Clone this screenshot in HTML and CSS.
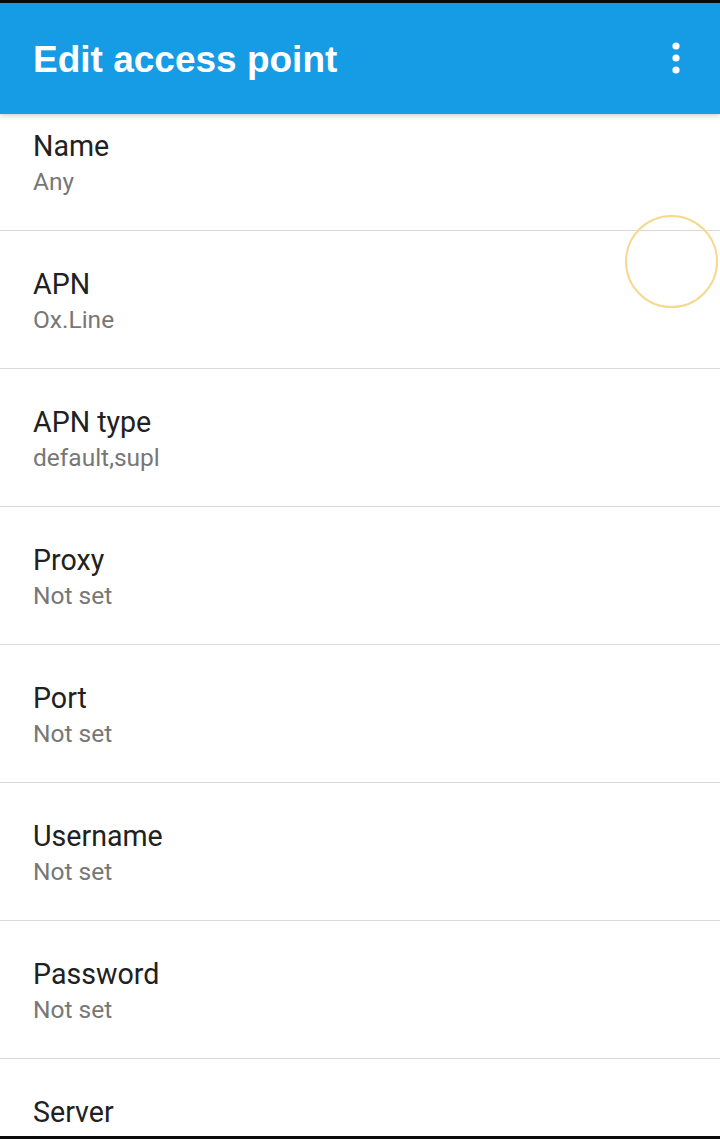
FILE: index.html
```html
<!DOCTYPE html>
<html lang="en">
<head>
<meta charset="utf-8">
<title>Edit access point</title>
<link rel="stylesheet" href="styles.css">
</head>
<body>
<div class="screen">
  <header class="appbar">
    <h1 class="appbar-title">Edit access point</h1>
    <button class="overflow" aria-label="More options">
      <svg width="12" height="36" viewBox="0 0 12 36"><circle cx="6" cy="6" r="3.6" fill="#fff"/><circle cx="6" cy="18" r="3.6" fill="#fff"/><circle cx="6" cy="30" r="3.6" fill="#fff"/></svg>
    </button>
  </header>
  <main class="list">
    <div class="pref first"><div class="pref-title">Name</div><div class="pref-summary">Any</div></div>
    <div class="pref"><div class="pref-title">APN</div><div class="pref-summary">Ox.Line</div></div>
    <div class="pref"><div class="pref-title">APN type</div><div class="pref-summary">default,supl</div></div>
    <div class="pref"><div class="pref-title">Proxy</div><div class="pref-summary">Not set</div></div>
    <div class="pref"><div class="pref-title">Port</div><div class="pref-summary">Not set</div></div>
    <div class="pref"><div class="pref-title">Username</div><div class="pref-summary">Not set</div></div>
    <div class="pref"><div class="pref-title">Password</div><div class="pref-summary">Not set</div></div>
    <div class="pref"><div class="pref-title">Server</div><div class="pref-summary">Not set</div></div>
    <div class="touch-ring"></div>
  </main>
</div>
</body>
</html>
```
FILE: styles.css
```css
html, body {
  margin: 0;
  padding: 0;
  background: #000;
}
.screen {
  width: 720px;
  height: 1139px;
  box-sizing: border-box;
  border-top: 3px solid #0a0a0a;
  border-bottom: 3px solid #0a0a0a;
  overflow: hidden;
  display: flex;
  flex-direction: column;
  background: #fff;
  font-family: Roboto, "Noto Sans", sans-serif;
}
.appbar {
  flex: 0 0 111px;
  background: #169be5;
  display: flex;
  align-items: center;
  justify-content: space-between;
  padding: 0 38px 0 33px;
  box-shadow: 0 2px 5px rgba(0,0,0,0.18);
  position: relative;
  z-index: 1;
}
.appbar-title {
  margin: 0;
  color: #fff;
  font-family: "Liberation Sans", Arial, sans-serif;
  font-size: 37px;
  font-weight: 700;
  line-height: 40px;
  margin-top: 2px;
}
.overflow {
  border: 0;
  background: none;
  padding: 0;
  display: flex;
  margin-top: -2px;
}
.list {
  flex: 1;
  position: relative;
  overflow: hidden;
}
.pref {
  padding: 35px 33px 30px;
  border-top: 1px solid #d9d9d9;
}
.pref.first {
  padding-top: 14px;
  border-top: 0;
}
.pref-title {
  font-size: 28.6px;
  line-height: 36px;
  color: #212121;
}
.pref-summary {
  font-size: 24.5px;
  line-height: 36px;
  color: #777;
}
.touch-ring {
  position: absolute;
  left: 625px;
  top: 101px;
  width: 93px;
  height: 93px;
  box-sizing: border-box;
  border: 2px solid #f6d98e;
  border-radius: 50%;
}
```
